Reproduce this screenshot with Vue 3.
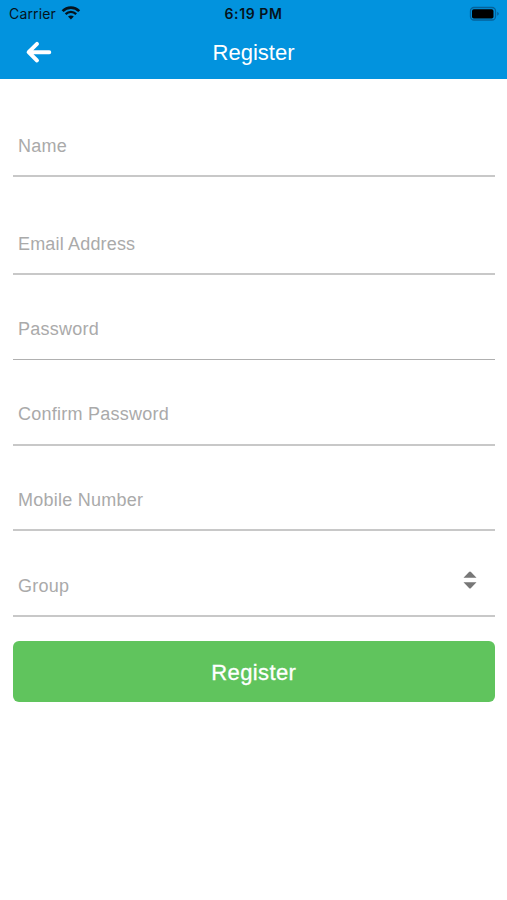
<script setup>
const fields = [
  { label: 'Name', cls: 'name' },
  { label: 'Email Address', cls: 'email' },
  { label: 'Password', cls: 'password' },
  { label: 'Confirm Password', cls: 'confirm' },
  { label: 'Mobile Number', cls: 'mobile' },
  { label: 'Group', cls: 'select' },
]
</script>

<template>
  <main class="screen">
    <header class="header">
      <div class="status">
        <div class="carrier">
          <span>Carrier</span>
          <svg class="wifi" width="20" height="16" viewBox="0 0 20 16" fill="none" stroke="#05131c">
            <path d="M1.6 6.1C6.2 1.5 13.6 1.5 18.2 6.1" stroke-width="2.7" />
            <path d="M4.6 9.2C7.7 6.2 12.1 6.2 15.2 9.2" stroke-width="2.3" />
            <path d="M7 11.6C8.7 10 11.1 10 12.8 11.6L9.9 14.5Z" fill="#05131c" stroke="none" />
          </svg>
        </div>
        <span class="time">6:19 PM</span>
        <svg class="battery" width="32" height="16" viewBox="0 0 32 16">
          <rect x="1.5" y="1.5" width="25" height="12.5" rx="3.5" fill="none" stroke="#05629a" stroke-width="1.3" />
          <rect x="3" y="3.2" width="21.5" height="9.3" rx="1.8" fill="#000" />
          <path d="M28.2 5.8C30.4 6.8 30.4 8.8 28.2 9.8Z" fill="#05629a" />
        </svg>
      </div>
      <div class="nav">
        <svg class="back" width="28" height="24" viewBox="0 0 28 24" fill="none" stroke="#fff" stroke-width="3.9" stroke-linecap="round" stroke-linejoin="round">
          <path d="M12 3.8L3.6 12.2L12 20.5M4 12.2H24.3" />
        </svg>
        <h1>Register</h1>
      </div>
    </header>
    <form class="form" @submit.prevent>
      <div v-for="field in fields" :key="field.label" class="field" :class="field.cls">
        <span>{{ field.label }}</span>
        <svg v-if="field.cls === 'select'" class="sort" width="14" height="20" viewBox="0 0 14 20" fill="#777">
          <path d="M.5 7.8L6 2Q7 1 8 2L13.5 7.8ZM.5 12.2H13.5L8 18Q7 19 6 18Z" />
        </svg>
      </div>
      <button class="submit" type="submit">Register</button>
    </form>
  </main>
</template>

<style>
body { background: #fff; }
</style>

<style scoped>
.screen {
  box-sizing: border-box;
  width: 100%;
  height: 900px;
  overflow: hidden;
  background: #fff;
  font-family: "Liberation Sans", Arial, sans-serif;
}
.header {
  box-sizing: border-box;
  height: 79px;
  background: #0293de;
}
.status {
  display: grid;
  grid-template-columns: 1fr auto 1fr;
  align-items: center;
  height: 27px;
  padding: 0 6px 0 9px;
  color: #05131c;
  font-family: Inter, sans-serif;
}
.carrier {
  display: flex;
  align-items: center;
  gap: 5px;
  font-size: 14px;
  letter-spacing: .15px;
}
.wifi { margin-top: -2px; }
.time {
  margin-right: 3px;
  font-size: 14px;
  font-weight: 600;
  letter-spacing: .6px;
}
.battery { justify-self: end; }
.nav {
  display: grid;
  grid-template-columns: 1fr auto 1fr;
  align-items: center;
  height: 50px;
  padding: 0 25px;
}
.nav::after { content: ""; }
h1 {
  margin: 1px 0 0;
  color: #fff;
  font-size: 22px;
  font-weight: 400;
  line-height: 27px;
}
.form { padding: 0 12.5px 0 13px; }
.field {
  box-sizing: border-box;
  display: flex;
  justify-content: space-between;
  align-items: flex-end;
  padding: 0 18px 19px 5px;
  border-bottom: 2px solid #c8c8c8;
  color: #aaa;
  font-size: 18px;
  line-height: 20px;
  letter-spacing: .25px;
}
.name { height: 98px; }
.email { height: 98px; letter-spacing: .17px; }
.password { height: 85px; padding-bottom: 20px; border-bottom: 1px solid #b0b0b0; }
.confirm { height: 86px; padding-bottom: 20px; }
.mobile { height: 85px; }
.select { height: 86px; }
.sort { margin-bottom: 6px; }
.submit {
  display: block;
  width: 100%;
  height: 61px;
  margin-top: 24px;
  padding: 3px 0 0;
  border: 0;
  border-radius: 6px;
  background: #60c45d;
  color: #fff;
  font-family: inherit;
  font-size: 22px;
  letter-spacing: .38px;
  -webkit-text-stroke: .3px #fff;
}
</style>
